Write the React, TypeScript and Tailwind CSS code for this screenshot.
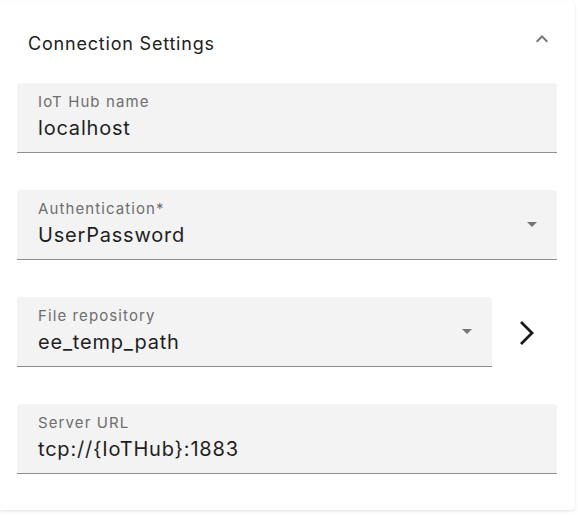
import React from 'react'

const FONT = { fontFamily: 'Inter, "Liberation Sans", sans-serif' }

function DropArrow() {
  return <svg viewBox="0 0 24 24" className="h-6 w-6 fill-[#757575]"><path d="M7 10l5 5 5-5z" /></svg>
}

function Field({ label, value, width = 'w-[540px]', select, trailing }: {
  label: string; value: string; width?: string; select?: boolean; trailing?: React.ReactNode
}) {
  return <div className="flex items-start">
    <div className={`${width} flex h-[70px] items-start rounded-t-[4px] border-b border-[#8f8f8f] bg-[#f3f3f3] pl-[21px] pr-[13px]`}>
      <div className="flex flex-1 flex-col pt-[10px]">
        <span className="text-[15px] leading-[18px] tracking-[1.1px] text-[#6e6e6e]">{label}</span>
        <span className="mt-[4px] text-[20px] leading-[26px] tracking-[0.8px] text-[#1f1f1f]">{value}</span>
      </div>
      {select && <div className="pt-[22px]"><DropArrow /></div>}
    </div>
    {trailing}
  </div>
}

export default function App() {
  return <div style={FONT} className="h-[516px] w-[578px] bg-white pt-[2px]">
    <div className="h-[508px] w-[575px] rounded-r-[4px] bg-white shadow-[0_1px_3px_rgba(0,0,0,0.12)]">
      <div className="flex h-[81px] items-start justify-between pl-[28px] pr-[21px]">
        <h2 className="pt-[30px] text-[18px] leading-[24px] tracking-[0.8px] text-[#212121]">Connection Settings</h2>
        <svg viewBox="0 0 24 24" className="mt-[25px] h-6 w-6 fill-[#757575]"><path d="M12 8l-6 6 1.41 1.41L12 10.83l4.59 4.58L18 14z" /></svg>
      </div>
      <div className="flex flex-col gap-[37px] pl-[17px]">
        <Field label="IoT Hub name" value="localhost" />
        <Field label="Authentication*" value="UserPassword" select />
        <Field label="File repository" value="ee_temp_path" width="w-[475px]" select trailing={
          <svg viewBox="0 0 20 30" className="ml-[24px] mt-[21px] h-[30px] w-[20px]">
            <polyline points="5,4 16,15 5,26" fill="none" stroke="#1a1a1a" strokeWidth="2.8" />
          </svg>
        } />
        <Field label="Server URL" value="tcp://{IoTHub}:1883" />
      </div>
    </div>
  </div>
}
